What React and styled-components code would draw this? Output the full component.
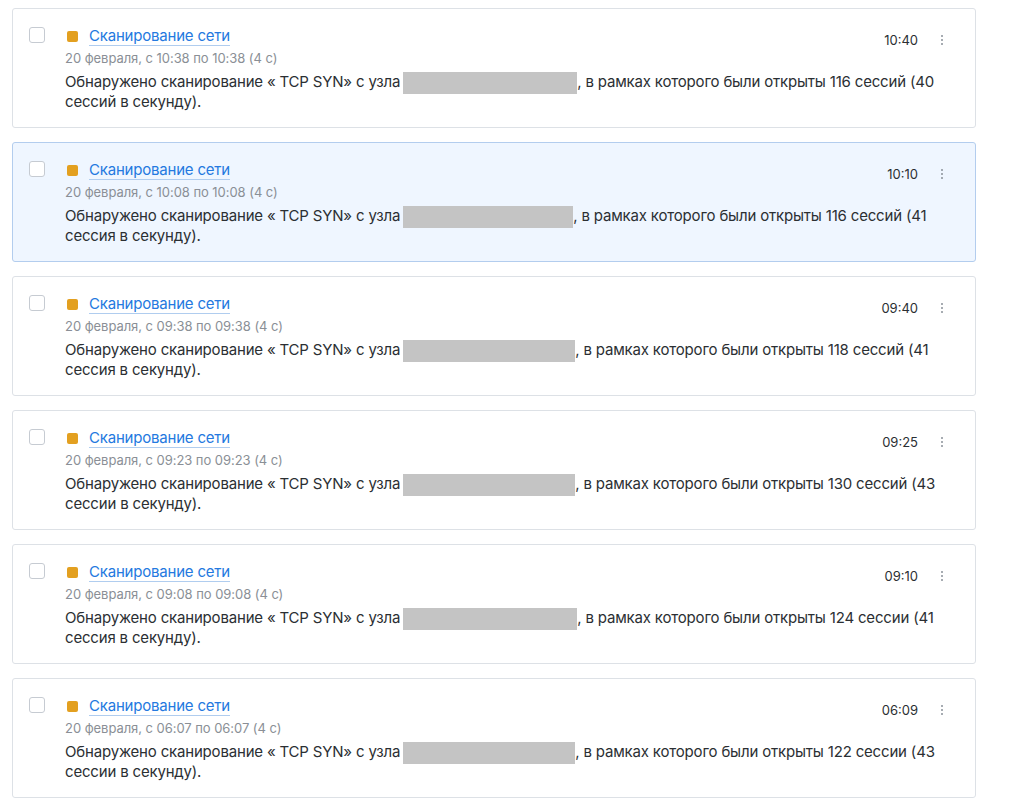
import React from "react";
import styled, { createGlobalStyle } from "styled-components";

const GlobalStyle = createGlobalStyle`
  body {
    margin: 0;
    background: #fff;
    font-family: Inter, "Noto Sans", sans-serif;
    color: #2b2f33;
  }
`;

const List = styled.div`
  display: flex;
  flex-direction: column;
  gap: 14px;
  width: 964px;
  padding: 8px 0 0 12px;
`;

const Card = styled.div`
  display: flex;
  gap: 20px;
  padding: 16px 24px 15px 16px;
  border: 1px solid ${(p) => (p.$active ? "#b3cdee" : "#dde1e6")};
  border-radius: 3px;
  background: ${(p) => (p.$active ? "#eff6ff" : "#fff")};
`;

const Check = styled.span`
  flex: none;
  width: 16px;
  height: 16px;
  margin-top: 2px;
  box-sizing: border-box;
  border: 1px solid #c6cbd2;
  border-radius: 3px;
  background: #fff;
`;

const Content = styled.div`
  flex: 1;
  min-width: 0;
`;

const Header = styled.div`
  display: flex;
  align-items: center;
  height: 20px;
  margin-top: 1px;
`;

const Marker = styled.span`
  flex: none;
  width: 11px;
  height: 11px;
  margin: 0 11px 0 2px;
  border-radius: 2px;
  background: #e3a020;
`;

const Title = styled.a`
  font-size: 15px;
  line-height: 19px;
  letter-spacing: -0.2px;
  color: #2479e0;
  text-decoration: none;
  border-bottom: 1px solid #b0cdef;
`;

const Time = styled.span`
  margin-left: auto;
  margin-top: 8px;
  font-size: 13px;
  color: #2b2f33;
`;

const Menu = styled.span`
  display: flex;
  flex-direction: column;
  gap: 2px;
  margin: 8px 8px 0 23px;
`;

const Dot = styled.i`
  width: 2px;
  height: 2px;
  border-radius: 50%;
  background: #8a9098;
`;

const Meta = styled.div`
  margin-top: 3px;
  font-size: 13px;
  line-height: 18px;
  letter-spacing: -0.05px;
  color: #8a8f96;
`;

const Body = styled.div`
  margin-top: 5px;
  font-size: 15px;
  line-height: 20px;
  letter-spacing: -0.18px;
  color: #2b2f33;
`;

const Hidden = styled.span`
  display: inline-block;
  height: 22px;
  margin: 0 0 -2px 3px;
  vertical-align: top;
  background: #c4c4c4;
`;

const items = [
  { from: "10:38", time: "10:40", n: 116, rate: "40", word: "сессий", hw: 174 },
  { from: "10:08", time: "10:10", n: 116, rate: "41", word: "сессия", hw: 170, active: true },
  { from: "09:38", time: "09:40", n: 118, rate: "41", word: "сессия", hw: 172 },
  { from: "09:23", time: "09:25", n: 130, rate: "43", word: "сессии", hw: 172 },
  { from: "09:08", time: "09:10", n: 124, rate: "41", word: "сессия", hw: 174, nword: "сессии" },
  { from: "06:07", time: "06:09", n: 122, rate: "43", word: "сессии", hw: 172, nword: "сессии" },
];

export default function App() {
  return (
    <>
      <GlobalStyle />
      <List>
        {items.map((it, i) => (
          <Card key={i} $active={it.active}>
            <Check />
            <Content>
              <Header>
                <Marker />
                <Title href="#">Сканирование сети</Title>
                <Time>{it.time}</Time>
                <Menu>
                  <Dot />
                  <Dot />
                  <Dot />
                </Menu>
              </Header>
              <Meta>
                20 февраля, с {it.from} по {it.from} (4 с)
              </Meta>
              <Body>
                Обнаружено сканирование « TCP SYN» с узла
                <Hidden style={{ width: it.hw }} />, в рамках которого были
                открыты {it.n} {it.nword || "сессий"} ({it.rate} {it.word} в
                секунду).
              </Body>
            </Content>
          </Card>
        ))}
      </List>
    </>
  );
}
